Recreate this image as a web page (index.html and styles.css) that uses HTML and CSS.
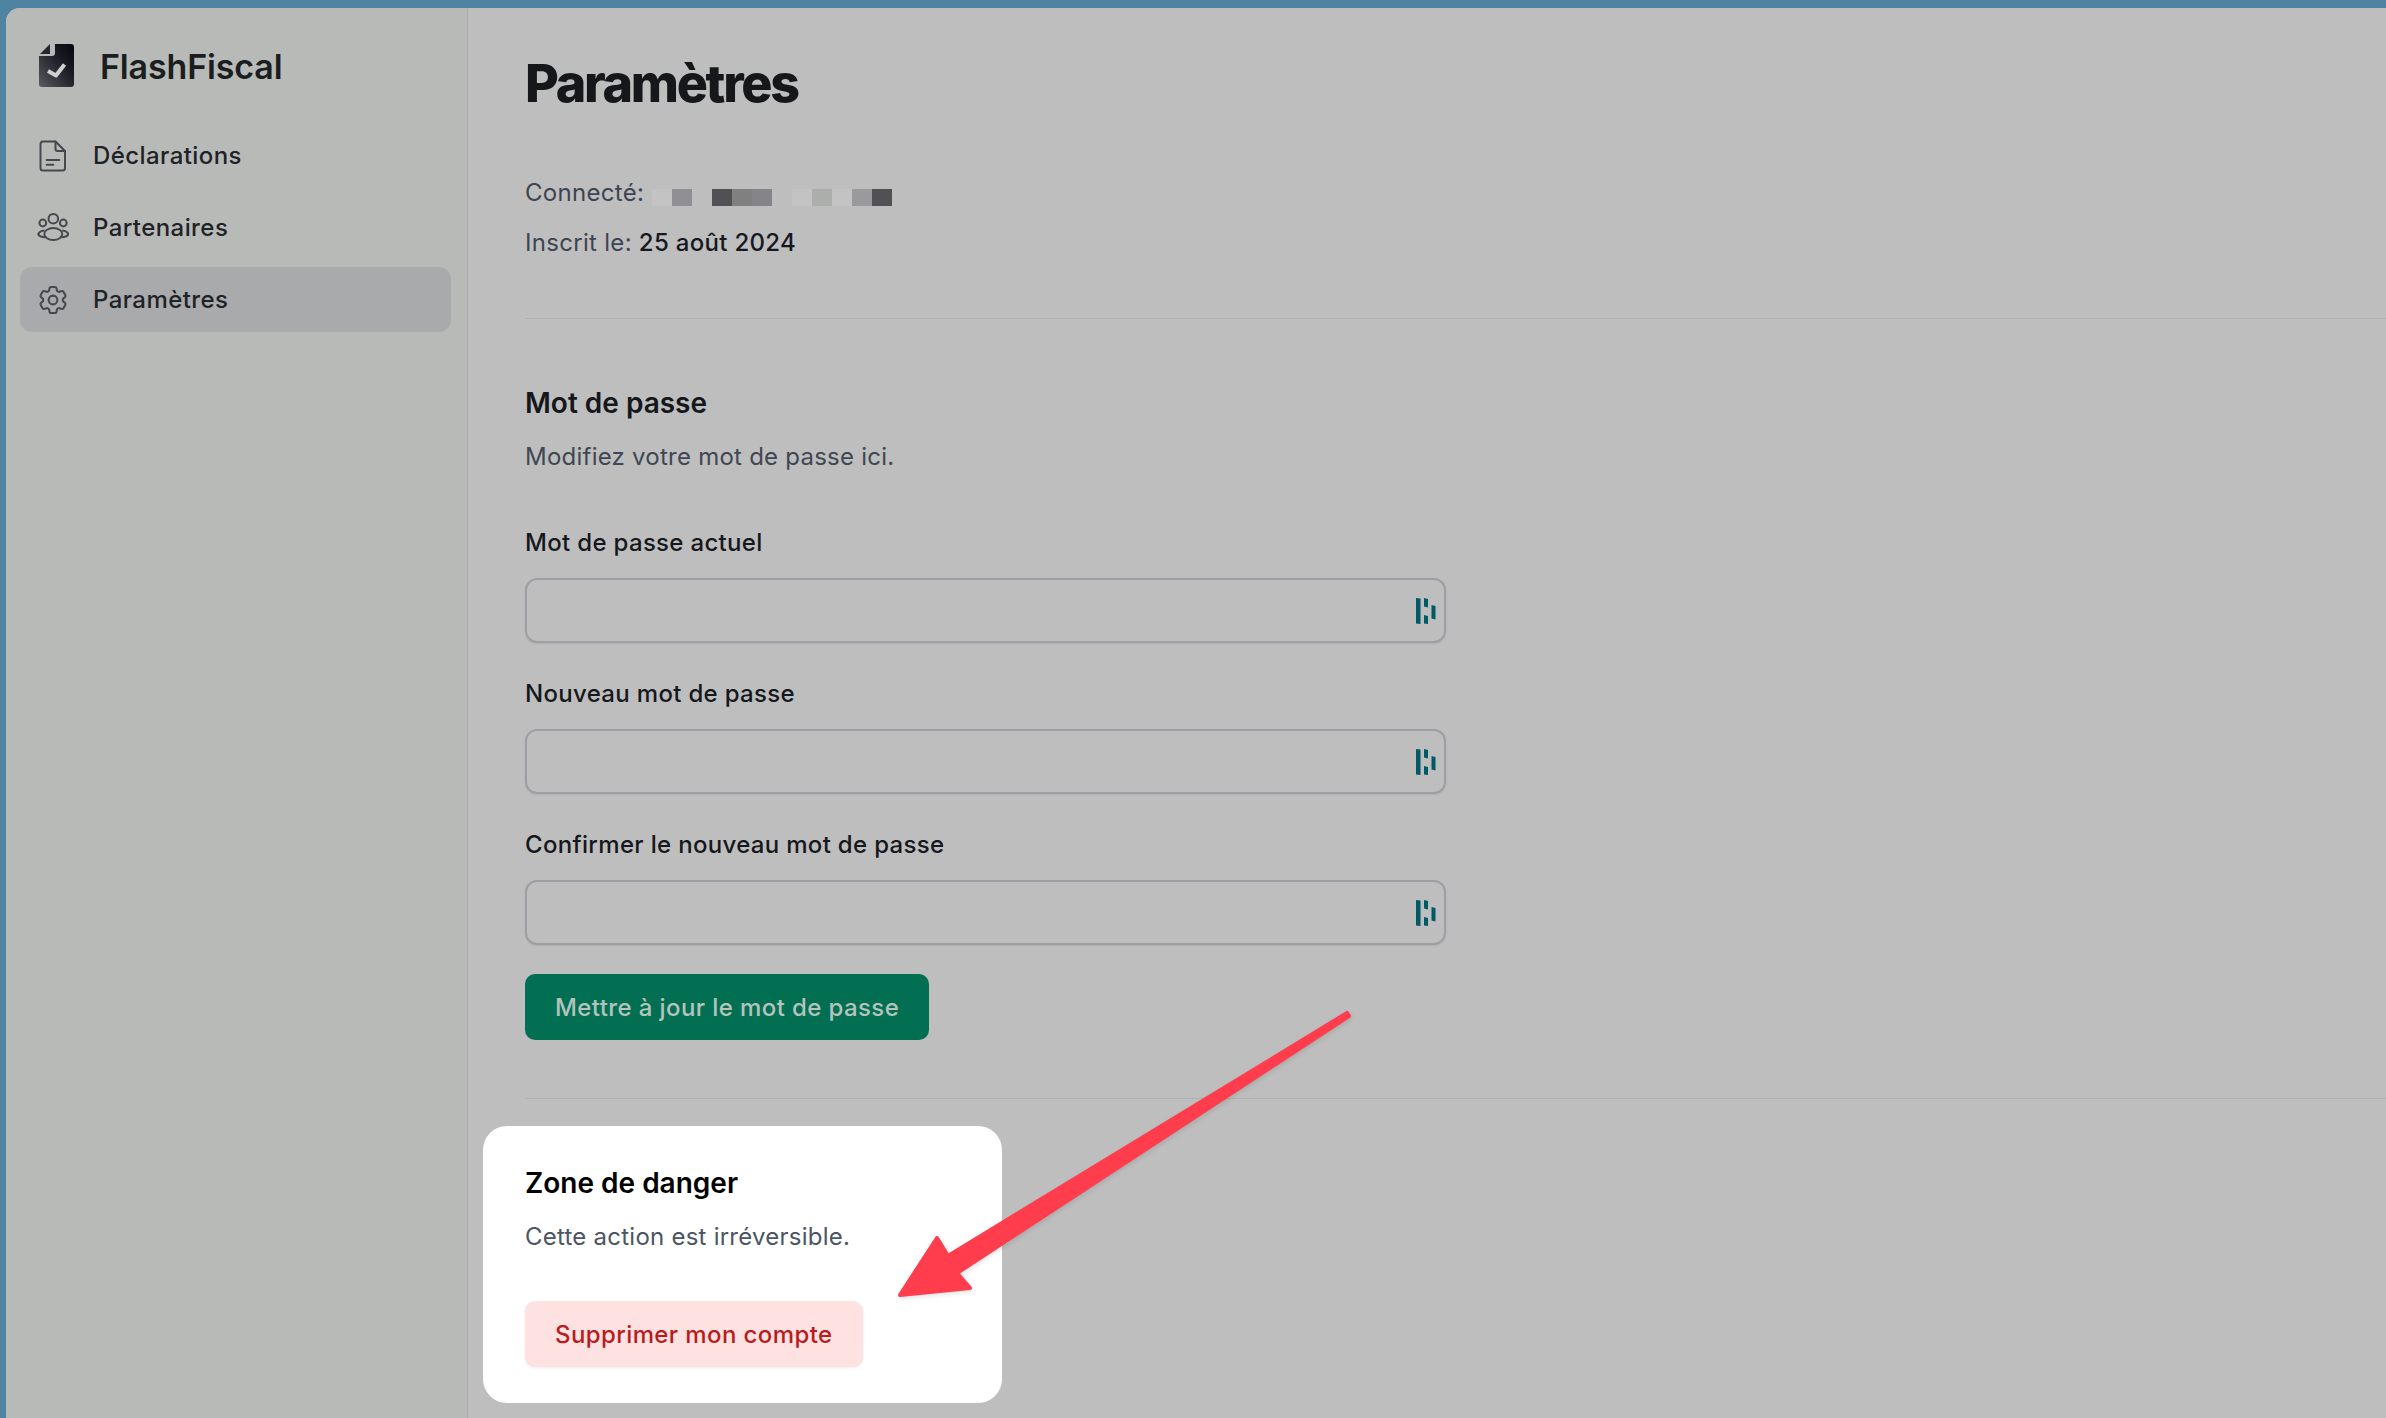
FILE: index.html
```html
<!DOCTYPE html>
<html lang="fr">
<head>
  <meta charset="UTF-8">
  <title>Paramètres - FlashFiscal</title>
  <link rel="stylesheet" href="styles.css">
</head>
<body>
  <div class="app">
    <aside class="sidebar">
      <div class="brand">
        <svg class="logo" width="35" height="43" viewBox="0 0 35 43">
          <defs>
            <linearGradient id="logoGrad" x1="0" y1="1" x2="1" y2="0">
              <stop offset="0" stop-color="#5a5a60"/>
              <stop offset="0.6" stop-color="#1c1c26"/>
              <stop offset="1" stop-color="#06060e"/>
            </linearGradient>
          </defs>
          <path d="M16 0H32a3 3 0 0 1 3 3V40a3 3 0 0 1-3 3H3a3 3 0 0 1-3-3V12H13a3 3 0 0 0 3-3Z" fill="url(#logoGrad)"/>
          <path d="M11 0V10H1Z" fill="#26262e"/>
          <path d="M9 27l8 4.5 8.5-11" fill="none" stroke="#cfd0d0" stroke-width="4" stroke-linejoin="round"/>
        </svg>
        <span class="brand-name">FlashFiscal</span>
      </div>
      <nav class="nav">
        <a class="nav-item">
          <svg width="32" height="32" viewBox="0 0 32 32" fill="none" stroke="#45484d" stroke-width="2" stroke-linecap="round" stroke-linejoin="round">
            <path d="M6 1.5H18.5L28 11V28a2.5 2.5 0 0 1-2.500 2.500H6A2.500 2.500 0 0 1 3.500 28V4A2.500 2.500 0 0 1 6 1.500Z"/>
            <path d="M18.500 1.500V9a2 2 0 0 0 2 2H28"/>
            <path d="M9.700 20H22.300M9.700 24.700H16.300"/>
          </svg>
          Déclarations
        </a>
        <a class="nav-item">
          <svg width="32" height="32" viewBox="0 0 32 32" fill="none" stroke="#45484d" stroke-width="2">
            <circle cx="16.300" cy="6.700" r="4.800"/>
            <circle cx="5.800" cy="11" r="3.400"/>
            <circle cx="26.300" cy="11" r="3.400"/>
            <ellipse cx="16.300" cy="22" rx="9" ry="6"/>
            <path d="M7.500 18.500C4.500 18.800 1.800 20.400 1.200 22.300 2 24 4.600 25.200 8.200 25.300"/>
            <path d="M25.100 18.500C28.100 18.800 30.800 20.400 31.400 22.300 30.600 24 28 25.200 24.400 25.300"/>
          </svg>
          Partenaires
        </a>
        <a class="nav-item active">
          <svg width="32" height="32" viewBox="1 1 22 22" fill="none" stroke="#45484d" stroke-width="1.400" stroke-linejoin="round">
            <path d="M9.594 3.940c.09-.542.56-.94 1.110-.94h2.593c.55 0 1.020.398 1.110.94l.213 1.281c.063.374.313.686.645.870.074.040.147.083.220.127.325.196.720.257 1.075.124l1.217-.456a1.125 1.125 0 0 1 1.370.490l1.296 2.247a1.125 1.125 0 0 1-.260 1.431l-1.003.827c-.293.241-.438.613-.430.992a7.723 7.723 0 0 1 0 .255c-.008.378.137.750.430.991l1.004.827c.424.350.534.955.260 1.430l-1.298 2.247a1.125 1.125 0 0 1-1.369.491l-1.217-.456c-.355-.133-.750-.072-1.076.124a6.470 6.470 0 0 1-.220.128c-.331.183-.581.495-.644.869l-.213 1.281c-.09.543-.56.940-1.110.940h-2.594c-.55 0-1.019-.398-1.110-.940l-.213-1.281c-.062-.374-.312-.686-.644-.870a6.520 6.520 0 0 1-.220-.127c-.325-.196-.720-.257-1.076-.124l-1.217.456a1.125 1.125 0 0 1-1.369-.490l-1.297-2.247a1.125 1.125 0 0 1 .260-1.431l1.004-.827c.292-.240.437-.613.430-.991a6.932 6.932 0 0 1 0-.255c.007-.380-.138-.751-.430-.992l-1.004-.827a1.125 1.125 0 0 1-.260-1.430l1.297-2.247a1.125 1.125 0 0 1 1.370-.491l1.216.456c.356.133.751.072 1.076-.124.072-.044.146-.086.220-.128.332-.183.582-.495.644-.869l.214-1.280Z"/>
            <circle cx="12" cy="12" r="3"/>
          </svg>
          Paramètres
        </a>
      </nav>
    </aside>

    <main class="main">
      <h1 class="page-title">Paramètres</h1>

      <section class="account">
        <div class="account-line">
          Connecté:
          <span class="redacted">
            <i class="px-a"></i><i class="px-b"></i><i class="px-0"></i><i class="px-c"></i><i class="px-d"></i><i class="px-e"></i><i class="px-0"></i><i class="px-a"></i><i class="px-f"></i><i class="px-a"></i><i class="px-g"></i><i class="px-c"></i>
          </span>
        </div>
        <div class="account-line">Inscrit le: <span class="strong">25 août 2024</span></div>
      </section>

      <section class="password">
        <h2 class="section-title">Mot de passe</h2>
        <p class="section-sub">Modifiez votre mot de passe ici.</p>

        <label class="field-label first">Mot de passe actuel</label>
        <div class="input">
          <svg width="20" height="26" viewBox="0 0 20 26" fill="#005a66"><path d="M0 0L4.500 .5V26L0 25.500ZM8 0L12 1V9.500L8 8.500ZM8 17L12 18V26L8 25.500ZM15.500 7L19.500 8V21.500L15.500 20.500Z"/></svg>
        </div>

        <label class="field-label">Nouveau mot de passe</label>
        <div class="input">
          <svg width="20" height="26" viewBox="0 0 20 26" fill="#005a66"><path d="M0 0L4.500 .5V26L0 25.500ZM8 0L12 1V9.500L8 8.500ZM8 17L12 18V26L8 25.500ZM15.500 7L19.500 8V21.500L15.500 20.500Z"/></svg>
        </div>

        <label class="field-label">Confirmer le nouveau mot de passe</label>
        <div class="input">
          <svg width="20" height="26" viewBox="0 0 20 26" fill="#005a66"><path d="M0 0L4.500 .5V26L0 25.500ZM8 0L12 1V9.500L8 8.500ZM8 17L12 18V26L8 25.500ZM15.500 7L19.500 8V21.500L15.500 20.500Z"/></svg>
        </div>

        <button class="btn btn-save">Mettre à jour le mot de passe</button>
      </section>

      <section class="danger">
        <h2 class="section-title black">Zone de danger</h2>
        <p class="section-sub">Cette action est irréversible.</p>
        <button class="btn btn-delete">Supprimer mon compte</button>
      </section>
    </main>
  </div>

  <svg class="arrow" width="480" height="320" viewBox="880 1000 480 320">
    <path d="M900 1295L937 1238L948 1256L1347 1013L1349 1016L957 1273L970 1288Z" fill="#ff3d4d" stroke="#ff3d4d" stroke-width="4" stroke-linejoin="round"/>
  </svg>
</body>
</html>
```
FILE: styles.css
```css
* {
  box-sizing: border-box;
}

html, body {
  margin: 0;
  height: 100%;
}

body {
  position: relative;
  background: #4e83a2;
  font-family: Inter, "Liberation Sans", sans-serif;
  overflow: hidden;
}

.app {
  display: flex;
  height: 1410px;
  margin: 8px 0 0 6px;
  background: #bebebe;
  border-top-left-radius: 14px;
  overflow: hidden;
}

/* sidebar */
.sidebar {
  flex: 0 0 462px;
  background: #b8bab8;
  border-right: 1px solid #a9abaa;
  padding: 36px 16px 0 14px;
}

.brand {
  display: flex;
  align-items: center;
  gap: 26px;
  padding-left: 19px;
  height: 43px;
}

.brand-name {
  margin-top: 1px;
  font-size: 34px;
  font-weight: 600;
  color: #1b1d1f;
  letter-spacing: -0.15px;
}

.nav {
  display: flex;
  flex-direction: column;
  gap: 7px;
  margin-top: 36px;
}

.nav-item {
  display: flex;
  align-items: center;
  gap: 24px;
  height: 65px;
  padding-left: 17px;
  border-radius: 12px;
  font-size: 24px;
  font-weight: 500;
  letter-spacing: 0.42px;
  color: #1f2226;
}

.nav-item.active {
  background: #a9aaac;
}

/* main column */
.main {
  flex: 1;
  padding: 42px 0 0 57px;
}

.page-title {
  margin: 0;
  font-size: 52px;
  line-height: 68px;
  font-weight: 800;
  letter-spacing: -2.3px;
  color: #15171a;
}

.account {
  margin-top: 49px;
  padding-bottom: 51px;
  border-bottom: 1px solid #b0b2b6;
}

.account-line {
  display: flex;
  align-items: center;
  gap: 7px;
  height: 50px;
  font-size: 24px;
  letter-spacing: 0.3px;
  color: #3c4552;
}

.strong {
  color: #15191f;
  font-weight: 500;
}

.redacted {
  display: flex;
  margin-left: 1px;
  margin-top: 10px;
}

.redacted i {
  display: block;
  width: 20px;
  height: 17px;
}

.px-0 { background: transparent; }
.px-a { background: #c3c3c3; }
.px-b { background: #909094; }
.px-c { background: #505055; }
.px-d { background: #808080; }
.px-e { background: #858589; }
.px-f { background: #acaeac; }
.px-g { background: #9a9a9c; }

.password {
  padding-top: 64px;
  padding-bottom: 58px;
  border-bottom: 1px solid #b0b2b6;
}

.section-title {
  margin: 0;
  font-size: 28px;
  line-height: 40px;
  font-weight: 600;
  color: #14171b;
}

.section-title.black {
  color: #000;
}

.section-sub {
  margin: 14px 0 0;
  font-size: 24px;
  line-height: 40px;
  letter-spacing: 0.24px;
  color: #3e4753;
}

.field-label {
  display: block;
  margin-top: 33px;
  margin-bottom: 17px;
  font-size: 24px;
  line-height: 36px;
  font-weight: 500;
  letter-spacing: 0.32px;
  color: #15181c;
}

.field-label.first {
  margin-top: 48px;
}

.input {
  display: flex;
  align-items: center;
  justify-content: flex-end;
  width: 921px;
  height: 65px;
  padding-right: 8px;
  border: 2px solid #9c9fa4;
  border-radius: 12px;
  box-shadow: 0 1px 2px rgba(0, 0, 0, 0.08);
}

.btn {
  display: block;
  border: 0;
  border-radius: 10px;
  height: 66px;
  padding: 0 30px;
  font-family: inherit;
  font-size: 24px;
  font-weight: 500;
  letter-spacing: 0.4px;
}

.btn-save {
  margin-top: 29px;
  background: #026f52;
  color: #b4c4bd;
}

.danger {
  width: 519px;
  height: 277px;
  margin: 27px 0 0 -42px;
  padding: 37px 42px 0;
  background: #fff;
  border-radius: 24px;
}

.danger .section-sub {
  margin-top: 14px;
  color: #4b5563;
}

.btn-delete {
  margin-top: 44px;
  background: #fee2e2;
  color: #b91c1c;
  box-shadow: 0 1px 3px rgba(0, 0, 0, 0.08);
}

.arrow {
  position: absolute;
  left: 880px;
  top: 1000px;
  filter: drop-shadow(1px 2px 2px rgba(0, 0, 0, 0.1));
}
```
